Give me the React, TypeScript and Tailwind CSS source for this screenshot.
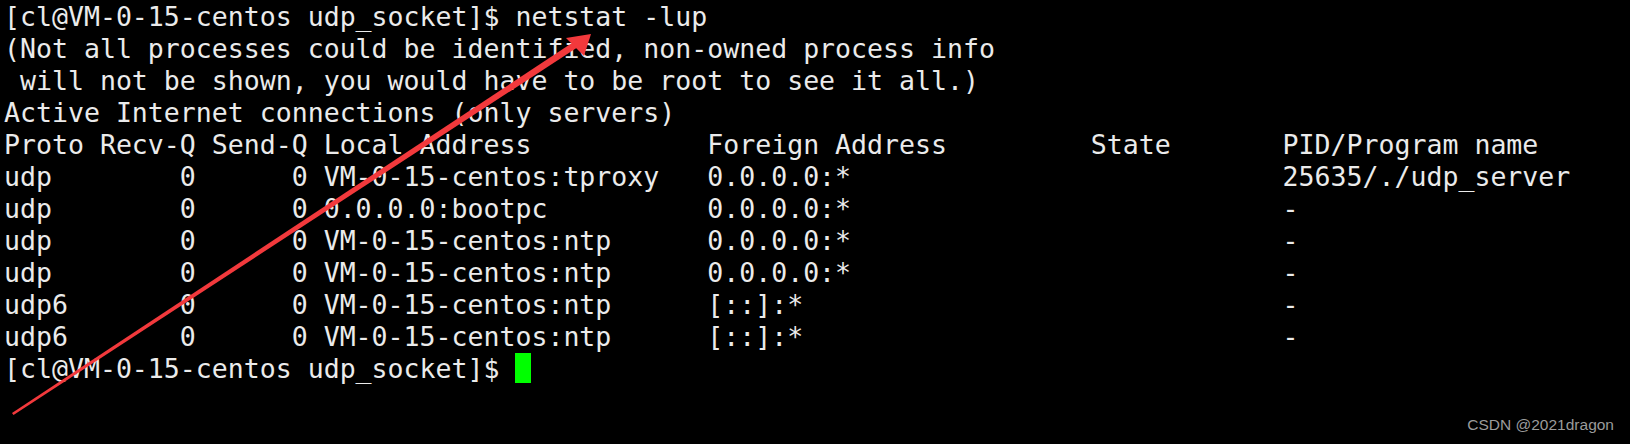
import React from 'react'

const LINES = [
  '[cl@VM-0-15-centos udp_socket]$ netstat -lup',
  '(Not all processes could be identified, non-owned process info',
  ' will not be shown, you would have to be root to see it all.)',
  'Active Internet connections (only servers)',
  'Proto Recv-Q Send-Q Local Address           Foreign Address         State       PID/Program name',
  'udp        0      0 VM-0-15-centos:tproxy   0.0.0.0:*                           25635/./udp_server',
  'udp        0      0 0.0.0.0:bootpc          0.0.0.0:*                           -',
  'udp        0      0 VM-0-15-centos:ntp      0.0.0.0:*                           -',
  'udp        0      0 VM-0-15-centos:ntp      0.0.0.0:*                           -',
  'udp6       0      0 VM-0-15-centos:ntp      [::]:*                              -',
  'udp6       0      0 VM-0-15-centos:ntp      [::]:*                              -',
]

function Arrow() {
  // tapering red arrow, thin at the tail, thicker near the head
  return (
    <svg className="absolute inset-0 pointer-events-none" width="1630" height="444" viewBox="0 0 1630 444">
      <polygon points="12,413 13.5,415 578,47 575,41" fill="#f2393c" />
      <polygon points="591,34 566,38 584,56" fill="#f2393c" />
    </svg>
  )
}

export default function App() {
  return (
    <div className="relative w-[1630px] h-[444px] bg-black overflow-hidden">
      <div
        className="flex flex-col pl-[4px] pt-[1px] text-[26.55px] leading-[32px] text-[#ebebeb] whitespace-pre"
        style={{ fontFamily: '"DejaVu Sans Mono", monospace' }}
      >
        {LINES.map((line, i) => (
          <div key={i} className="h-[32px]">{line}</div>
        ))}
        <div className="h-[32px] flex items-start">
          <span>{'[cl@VM-0-15-centos udp_socket]$ '}</span>
          <span className="inline-block w-[16px] h-[30px] bg-[#00ff00]" />
        </div>
      </div>

      <Arrow />

      <div
        className="absolute right-[16px] bottom-[8px] text-[15.5px] text-[#9b9b9b]"
        style={{ fontFamily: '"Liberation Sans", Arial, sans-serif' }}
      >
        CSDN @2021dragon
      </div>
    </div>
  )
}
